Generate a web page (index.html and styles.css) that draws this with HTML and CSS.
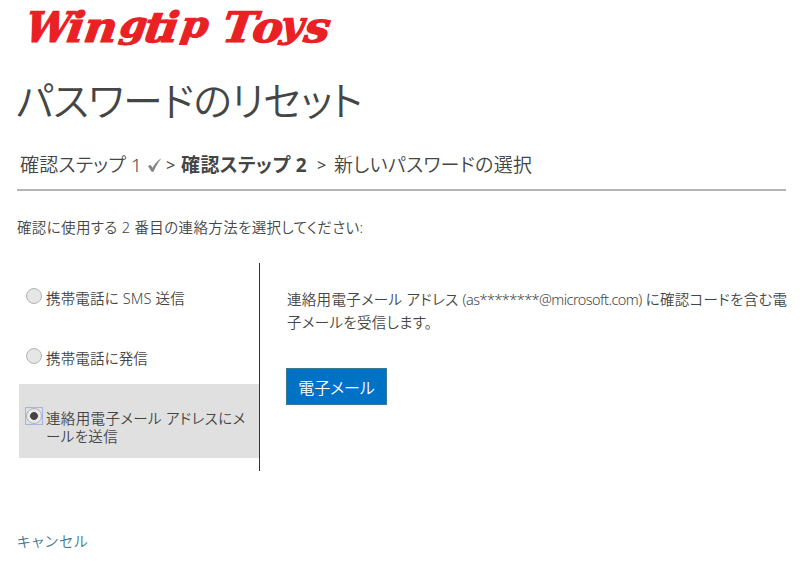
FILE: index.html
```html
<!DOCTYPE html>
<html lang="ja">
<head>
<meta charset="utf-8">
<title>パスワードのリセット</title>
<link rel="stylesheet" href="styles.css">
</head>
<body>
<main class="page">
  <svg class="logo" viewBox="0 0 400 54" role="img" aria-label="Wingtip Toys">
    <text class="logo-text" transform="skewX(-8) scale(1.2 1)" y="42.5"><tspan x="11" textLength="37" lengthAdjust="spacingAndGlyphs">W</tspan><tspan x="45.5 59.5">in</tspan><tspan class="low" x="89" y="37">g</tspan><tspan x="110 124" y="42.5">ti</tspan><tspan class="low" x="140" y="37">p</tspan></text>
    <text class="logo-text" transform="skewX(-8) scale(1.2 1)" y="42.5"><tspan x="175 200">To</tspan><tspan class="low" x="223" y="37">y</tspan><tspan x="243" y="42.5">s</tspan></text>
  </svg>
  <h1 class="title">パスワードのリセット</h1>
  <nav class="steps">
    <span class="step step-done">確認ステップ 1</span>
    <svg class="check" viewBox="0 0 16 16"><path d="M1 9.2 3.5 7.8 5.6 10.7C7.8 6.5 10.5 3.4 14.4 1.2 11.3 5 8.6 9.6 6.5 14.8L4.6 14.8Z"/></svg>
    <span class="arrow arrow-one">&gt;</span>
    <span class="step step-current">確認ステップ 2</span>
    <span class="arrow arrow-two">&gt;</span>
    <span class="step step-next">新しいパスワードの選択</span>
  </nav>
  <p class="prompt">確認に使用する 2 番目の連絡方法を選択してください:</p>
  <div class="methods">
    <div class="options">
      <label class="option"><span class="ring"><i class="radio"></i></span><span class="label">携帯電話に SMS 送信</span></label>
      <label class="option"><span class="ring"><i class="radio"></i></span><span class="label">携帯電話に発信</span></label>
      <label class="option selected"><span class="ring"><i class="radio"></i></span><span class="label label-mail">連絡用電子メール アドレスにメ<br>ールを送信</span></label>
    </div>
    <section class="detail">
      <p class="info">連絡用電子メール アドレス <span class="address">(as********@microsoft.com)</span> に確認コードを含む電<br>子メールを受信します。</p>
      <button class="send" type="button">電子メール</button>
    </section>
  </div>
  <a class="cancel">キャンセル</a>
</main>
</body>
</html>
```
FILE: styles.css
```css
* { box-sizing: border-box; }
body {
  margin: 0;
  background: #fff;
  color: #444645;
  font-family: "Noto Sans", "Noto Sans CJK JP", sans-serif;
  font-feature-settings: "palt";
  font-size: 14.5px;
  font-weight: 350;
  overflow: hidden;
}
.page { width: 800px; height: 562px; padding-left: 17px; display: flex; flex-direction: column; align-items: flex-start; white-space: nowrap; }
.logo { width: 400px; height: 54px; flex: none; display: block; }
.logo-text { font: italic bold 42px "DejaVu Serif Condensed", "DejaVu Serif", serif; font-stretch: condensed; fill: #e92124; stroke: #e92124; stroke-width: 1.2px; }
.low { font-size: 36px; }
.title { margin: 17px 0 0 -1px; height: 60px; line-height: 60px; font-size: 40px; font-weight: 350; letter-spacing: -0.6px; }
.steps { width: 769px; height: 60px; padding: 10px 0 0 3px; border-bottom: 2px solid #b5b5b5; display: flex; align-items: center; font-size: 19px; line-height: 30px; }
.step-done { width: 127px; letter-spacing: 0.2px; }
.step-next { letter-spacing: 0.3px; padding-left: 1px; }
.check { width: 16px; height: 16px; fill: #858585; }
.arrow { font-size: 16px; font-weight: 400; }
.arrow-one { width: 18px; padding-left: 3px; }
.step-current { width: 136px; font-weight: 700; letter-spacing: 0.4px; }
.arrow-two { width: 16px; }
.prompt { margin: 24px 0 0; height: 24px; line-height: 24px; letter-spacing: 0.36px; }
.methods { margin-top: 24px; height: 208px; display: flex; }
.options { width: 243px; padding: 0 0 0 2px; border-right: 1px solid #333; }
.option { display: flex; align-items: flex-start; height: 60px; padding: 24px 0 0 6px; }
.ring { width: 18px; height: 18px; padding: 1px; margin-right: 3px; flex: none; }
.radio { display: block; width: 16px; height: 16px; border: 1px solid #b3b3b3; border-radius: 50%; background: #e6e6e6; }
.label { line-height: 18px; padding-top: 2px; letter-spacing: 0.15px; }
.label-mail { letter-spacing: 0.35px; }
.selected { height: 74px; background: #e0e0e0; margin-top: 1px; padding-top: 23px; }
.selected .ring { border: 1px solid #a5b4e0; padding: 0; }
.selected .radio { background: radial-gradient(circle, #444 0 3.5px, #e9e9e9 4.3px); }
.detail { padding: 25px 0 0 27px; }
.info { margin: 0; line-height: 23px; letter-spacing: 0.3px; }
.address { letter-spacing: -0.55px; }
.send { display: block; margin: 34px 0 0 -1px; width: 101px; height: 37px; padding: 0; border: 1px solid #397c91; background: #0072c6; color: #fff; font: 350 16px "Noto Sans", "Noto Sans CJK JP", sans-serif; font-feature-settings: "palt"; }
.cancel { margin-top: 58px; line-height: 24px; color: #457789; letter-spacing: 1.3px; }
```
